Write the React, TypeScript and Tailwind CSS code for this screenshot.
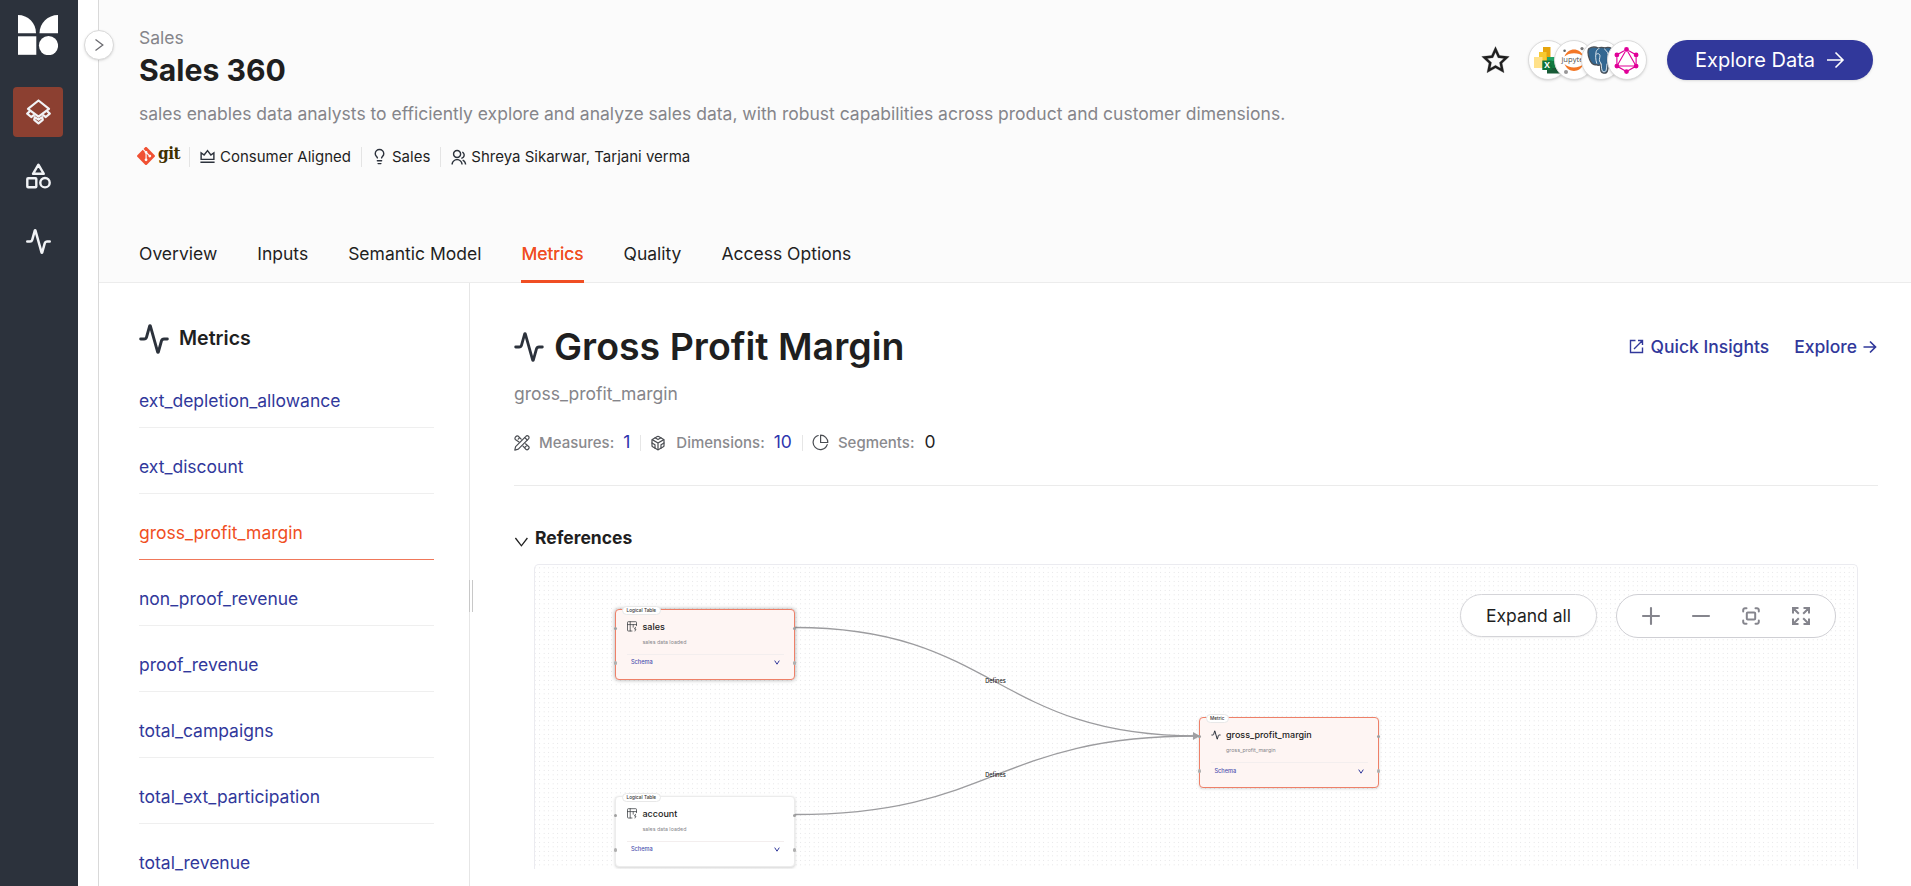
import React from "react";
import { RiStarLine, RiVipCrownLine, RiGroupLine } from "react-icons/ri";
import { SiGit, SiGraphql } from "react-icons/si";
import { Activity, Lightbulb } from "lucide-react";

const metricNames = [
  "ext_depletion_allowance",
  "ext_discount",
  "gross_profit_margin",
  "non_proof_revenue",
  "proof_revenue",
  "total_campaigns",
  "total_ext_participation",
  "total_revenue",
];

const tabs = ["Overview", "Inputs", "Semantic Model", "Metrics", "Quality", "Access Options"];

function Logo() {
  return (
    <svg width="40" height="40" viewBox="0 0 40 40" fill="#fff">
      <path d="M0 0C10 0 18 8 18 18.3H0Z" />
      <path d="M40 0C30 0 21.5 8 21.5 18.3H40Z" />
      <rect y="21.3" width="18.3" height="18.5" />
      <circle cx="30.5" cy="30.6" r="9.6" />
    </svg>
  );
}

function LayersIcon() {
  return (
    <svg width="25" height="26" viewBox="0 0 25 26" fill="none" stroke="#f1f3f6" strokeWidth="2.2" strokeLinejoin="round" strokeLinecap="round">
      <path d="M12.5 1.5 23 9.8 12.5 17.6 2 9.8Z" />
      <path d="M3.4 12.7 1.2 14.6 5.2 18 7.8 16.1M21.6 12.7l2.2 1.9-4 3.4-2.6-1.9" />
      <path d="M8.8 18.2 8.2 20.8 12.5 24.4 16.8 20.8 16.2 18.2 12.5 20.6Z" />
    </svg>
  );
}

function ShapesIcon() {
  return (
    <svg width="25" height="26" viewBox="0 0 25 26" fill="none" stroke="#f1f3f6" strokeWidth="2.4" strokeLinejoin="round">
      <path d="M12.4 1.7 17.8 10.8H7Z" />
      <rect x="1.3" y="15.2" width="9" height="9" rx="0.8" />
      <circle cx="19" cy="19.7" r="4.7" />
    </svg>
  );
}

function RulerIcon() {
  return (
    <svg width="16" height="16" viewBox="0 0 16 16" fill="none" stroke="#4a4d52" strokeWidth="1.2" strokeLinejoin="round" strokeLinecap="round">
      <path d="M.8 15.2 1.6 11.6 11.9 1.3a1.7 1.7 0 0 1 2.6 0 1.8 1.8 0 0 1 0 2.6L4.3 14.2Z" />
      <path d="M10.8 2.6 13.2 5M5 6.9 1.3 4.4C.2 2.8 2.3.5 4 1L7.2 4.2M4.2 4.2l1.3-1.3M9 11.2l3.2 3.4c1.4.8 3.6-1.4 2.7-2.9L11.5 8.8M11 12.2l1.2-1.1" />
    </svg>
  );
}

function CubeIcon() {
  return (
    <svg width="16" height="16" viewBox="0 0 24 24" fill="none" stroke="#4a4d52" strokeWidth="1.8" strokeLinejoin="round" strokeLinecap="round">
      <path d="M21 16V8a2 2 0 0 0-1-1.73l-7-4a2 2 0 0 0-2 0l-7 4A2 2 0 0 0 3 8v8a2 2 0 0 0 1 1.73l7 4a2 2 0 0 0 2 0l7-4A2 2 0 0 0 21 16z" />
      <path d="M7.5 4.21 12 6.81l4.5-2.6M7.5 19.79V14.6L3 12M21 12l-4.5 2.6v5.19M3.27 6.96 12 12.01l8.73-5.05M12 22.08V12" />
    </svg>
  );
}

function PieIcon() {
  return (
    <svg width="17" height="17" viewBox="0 0 17 17" fill="none" stroke="#4a4d52" strokeWidth="1.2" strokeLinejoin="round" strokeLinecap="round">
      <path d="M6.2 1.5A7.2 7.2 0 1 0 15.2 10.6" />
      <path d="M8.6 1.2V8.5H15.8A7.2 7.2 0 0 0 8.6 1.2Z" />
    </svg>
  );
}

function TableIcon() {
  return (
    <svg width="10" height="11" viewBox="0 0 10 11" fill="none" stroke="#3a3d42" strokeWidth="0.75" strokeLinejoin="round" strokeLinecap="round">
      <path d="M5 10H1.2A.7.7 0 0 1 .5 9.3V1.4A.7.7 0 0 1 1.2.7H8.8a.7.7 0 0 1 .7.7V4.6M.5 3.6H9.5M3.2.7V10M6.2 3.6V6.2" />
      <path d="M8.6 6.2 7.4 8H9L8 10" />
    </svg>
  );
}

function Tools() {
  return (
    <div className="flex w-[121px]">
      <div className="-mr-[13.7px] flex h-10 w-10 shrink-0 items-center justify-center rounded-full border border-[#dcdcdc] bg-white shadow-sm">
        <svg width="28" height="28" viewBox="0 0 28 28">
          <rect x="9" y="1" width="7.5" height="16" fill="#e6a50e" />
          <rect x="5" y="6" width="7.5" height="16" fill="#f7c92f" />
          <rect x="0" y="11" width="8.5" height="11" fill="#ffe18a" />
          <rect x="13" y="11" width="14" height="16" fill="#21a366" />
          <rect x="13" y="19" width="14" height="8.5" fill="#185c37" />
          <rect x="18" y="15" width="9" height="7" fill="#107c41" />
          <rect x="8.3" y="14.5" width="9.5" height="9.5" fill="#0f733a" />
          <text x="13" y="22.4" textAnchor="middle" fontSize="8.5" fontWeight="700" fill="#fff" fontFamily="Open Sans, sans-serif">X</text>
        </svg>
      </div>
      <div className="-mr-[13.7px] flex h-10 w-10 shrink-0 items-center justify-center rounded-full border border-[#dcdcdc] bg-white shadow-sm">
        <svg width="30" height="30" viewBox="0 0 30 30">
          <path d="M5.5 11.5C9 2.2 21 2.2 24.5 11.5C20 7 10 7 5.5 11.5Z" fill="#f37726" />
          <path d="M5.5 19C9 28.2 21 28.2 24.5 19C20 23.6 10 23.6 5.5 19Z" fill="#f37726" />
          <circle cx="5.6" cy="5.8" r="1.3" fill="#616262" />
          <circle cx="23" cy="3.6" r="1.6" fill="#767677" />
          <circle cx="7" cy="27" r="2" fill="#989798" />
          <text x="15" y="17.4" textAnchor="middle" fontSize="7.6" fill="#4e4e4e" fontFamily="Open Sans, sans-serif">jupyter</text>
        </svg>
      </div>
      <div className="-mr-[13.7px] flex h-10 w-10 shrink-0 items-center justify-center rounded-full border border-[#dcdcdc] bg-white shadow-sm">
        <svg width="28" height="28" viewBox="0 0 28 28" strokeLinejoin="round" strokeLinecap="round">
          <path d="M2 2.5C5 .6 9 1 11.3 2 13.5 1 16 1.3 18 1.9 21 .6 25.4 1.5 26.5 5c.8 3-1.5 8-3.2 11.3 1 .7 3 .4 3.8.7-1 2-4 2.6-6 2 0 2.5 0 6-1.6 7.6-1.6 1-4.6.6-5.5-1.4-.5-2-.3-4.6-.5-6.8-1.5 1.3-3.2 1-4.2.2C6 19.5 4.2 17.5 2.6 13.6 1.2 9.8.2 5 2 2.5Z" fill="#336791" stroke="#4a4f55" strokeWidth="1.3" />
          <path d="M9.7 17.2C8.5 14 8.3 9 9.2 5.5 10 3.5 11 2.8 12 2.5M17.5 3c2.8 2 4 5 3.7 7.3-.2 2 .4 3-.2 5M14 18c0-2-2-2-1.6-4.5C13 10 13.5 9 12 8c-1-.6-2-.3-2.6.2M14.2 18c.3 3 .2 6 1.6 7.5 1.5.8 3 0 3.4-1.2.5-2 .4-4.3.7-6.3" fill="none" stroke="#fff" strokeWidth="0.8" />
        </svg>
      </div>
      <div className="flex h-10 w-10 shrink-0 items-center justify-center rounded-full border border-[#dcdcdc] bg-white shadow-sm">
        <SiGraphql size={27} color="#e10098" />
      </div>
    </div>
  );
}

function Handles() {
  return (
    <>
      <i className="absolute top-[17px] -left-[2px] h-[3px] w-[3px] rounded-full bg-[#a0a0a0]" />
      <i className="absolute top-[17px] -right-[2px] h-[3px] w-[3px] rounded-full bg-[#a0a0a0]" />
      <i className="absolute top-[51px] -left-[2px] h-[4px] w-[3px] rounded-full bg-[#b0b0b0]" />
      <i className="absolute top-[51px] -right-[2px] h-[4px] w-[3px] rounded-full bg-[#b0b0b0]" />
    </>
  );
}

function Node({ kind, title, note, place, tone }: { kind: string; title: string; note: string; place: string; tone: string }) {
  return (
    <div className={`absolute h-[71px] w-[180px] rounded-[4px] border ${place} ${tone}`}>
      <span className="absolute -top-[4px] left-[6px] flex h-[9px] items-center rounded-full border-[0.5px] border-[#e8e8e8] bg-white px-[3.5px] pt-px text-[4.7px] font-medium text-[#333]">
        {kind}
      </span>
      <div className="flex h-full flex-col pt-[11px] pr-[10px] pl-[11px]">
        <div className="flex h-[12px] items-center gap-[5.5px]">
          {kind === "Metric" ? <Activity size={10} color="#2c323c" strokeWidth={2.4} /> : <TableIcon />}
          <span className="text-[9px] font-medium text-[#222]">{title}</span>
        </div>
        <div className="mt-[5.5px] ml-[15.5px] flex h-[9px] items-center text-[5.3px] text-[#85858a]">{note}</div>
        <div className="mt-[6.5px] flex h-[17px] items-center justify-between border-t-[0.5px] border-[#f3eeee] px-[4px]">
          <span className="text-[5.6px] font-medium text-[#4a4fae]">Schema</span>
          <svg width="6" height="5" viewBox="0 0 6 5" fill="none" stroke="#31389b" strokeWidth="1">
            <path d="M.7.6 3 4.2 5.3.6" />
          </svg>
        </div>
      </div>
      <Handles />
    </div>
  );
}

function Graph() {
  return (
    <div className="relative ml-5 h-[305px] w-[1324px] overflow-hidden rounded-t-[5px] border border-b-0 border-[#ebebf0]">
      <svg className="absolute inset-0" width="1322" height="305">
        <defs>
          <pattern id="dots" x="2.4" y="0.6" width="4.5" height="4.5" patternUnits="userSpaceOnUse">
            <circle cx="2.25" cy="2.25" r="0.4" fill="#bcbcc4" />
          </pattern>
        </defs>
        <rect width="1322" height="305" fill="url(#dots)" />
        <g fill="none" stroke="#9c9c9f" strokeWidth="1.3">
          <path d="M260 62.5C460 62.5 460 171 662 171" />
          <path d="M260 249.5C460 249.5 460 171 662 171" />
        </g>
        <path d="M658 167 665 171 658 175Z" fill="#a0a0a3" />
        <g fontSize="5.6" fontWeight="500" fill="#222" textAnchor="middle" fontFamily="Inter, sans-serif">
          <text x="460.5" y="117.5">Defines</text>
          <text x="460.5" y="211.5">Defines</text>
        </g>
      </svg>
      <Node kind="Logical Table" title="sales" note="sales data loaded" place="left-[80px] top-[43.5px]" tone="border-[#ee8068] bg-[#fef5f3] shadow-[0_0_4px_rgba(0,0,0,0.35)]" />
      <Node kind="Logical Table" title="account" note="sales data loaded" place="left-[80px] top-[230.5px]" tone="border-[#ececec] bg-white shadow-[0_1px_3px_rgba(0,0,0,0.18)]" />
      <Node kind="Metric" title="gross_profit_margin" note="gross_profit_margin" place="left-[663.5px] top-[152px]" tone="border-[#ee8068] bg-[#fef5f3] shadow-[0_1px_3px_rgba(0,0,0,0.15)]" />
      <div className="absolute top-[29px] right-[21px] flex items-start gap-[19px]">
        <button className="h-[43px] w-[137px] rounded-full border border-[#d4d4d8] bg-white pt-[2px] text-[17.5px] text-[#1f1f1f] shadow-[0_1px_2px_rgba(0,0,0,0.06)]">Expand all</button>
        <div className="flex h-[44px] w-[220px] items-center justify-between rounded-full border border-[#cfcfd4] bg-white px-[24px] text-[#85858d]">
          <svg width="20" height="20" viewBox="0 0 20 20" stroke="currentColor" strokeWidth="2.1" strokeLinecap="round"><path d="M2 10H18M10 2V18" /></svg>
          <svg width="20" height="20" viewBox="0 0 20 20" stroke="currentColor" strokeWidth="2.1" strokeLinecap="round"><path d="M2 10H18" /></svg>
          <svg width="20" height="20" viewBox="0 0 20 20" fill="none" stroke="currentColor" strokeWidth="2" strokeLinecap="round">
            <path d="M2.2 5.5V4A1.8 1.8 0 0 1 4 2.2H5.5M14.5 2.2H16A1.8 1.8 0 0 1 17.8 4V5.5M17.8 14.5V16A1.8 1.8 0 0 1 16 17.8H14.5M5.5 17.8H4A1.8 1.8 0 0 1 2.2 16V14.5" />
            <rect x="5.8" y="6.6" width="8.4" height="7" rx="1" />
          </svg>
          <svg width="20" height="20" viewBox="0 0 20 20" fill="none" stroke="currentColor" strokeWidth="2">
            <path d="M2 7.5V2H7.5M2.3 2.3 7.8 7.8M12.5 2H18V7.5M17.7 2.3 12.2 7.8M18 12.5V18H12.5M17.7 17.7 12.2 12.2M7.5 18H2V12.5M2.3 17.7 7.8 12.2" />
          </svg>
        </div>
      </div>
    </div>
  );
}

export default function App() {
  return (
    <div className="flex h-[886px] w-[1911px] overflow-hidden bg-white font-[Inter,sans-serif] text-[#1f1f1f]">
      <nav className="flex w-[78px] shrink-0 flex-col items-center bg-[#2c323c] pt-[15px]">
        <div className="-ml-[2px] h-10 w-10"><Logo /></div>
        <div className="mt-8 -ml-[2px] flex h-[50px] w-[50px] items-center justify-center rounded-[4px] bg-[#8c4031]"><LayersIcon /></div>
        <div className="mt-[26px] -ml-px"><ShapesIcon /></div>
        <div className="mt-[39px] -ml-px"><Activity size={27} color="#f1f3f6" strokeWidth={2.2} /></div>
      </nav>
      <div className="relative w-[21px] shrink-0 border-r border-[#d9d9d9]">
        <button className="absolute top-[30px] left-[6px] z-10 flex h-[30px] w-[30px] items-center justify-center rounded-full border border-[#d9d9d9] bg-white shadow-sm">
          <svg width="10" height="14" viewBox="0 0 10 14" fill="none" stroke="#6b6b70" strokeWidth="1.3"><path d="M1.5 1.5 8.8 7 1.5 12.5" /></svg>
        </button>
      </div>
      <div className="flex min-w-0 flex-1 flex-col">
        <header className="flex h-[283px] shrink-0 flex-col border-b border-[#ececec] bg-[#fbfbfb] pl-10">
          <div className="flex h-[100px] justify-between">
            <div className="pt-[26px]">
              <div className="text-[17.5px] leading-[24px] text-[#85858a]">Sales</div>
              <h1 className="mt-[1px] text-[30.2px] leading-[38px] font-bold">Sales 360</h1>
            </div>
            <div className="mt-10 mr-[38px] flex h-10 items-center">
              <RiStarLine size={29} stroke="currentColor" strokeWidth={0.2} className="mr-[18px]" />
              <Tools />
              <button className="ml-[18px] flex h-10 w-[206px] items-center justify-center gap-[11px] rounded-full bg-[#31389b] text-[20px] text-white shadow-sm">
                Explore Data
                <svg width="19" height="18" viewBox="0 0 19 18" fill="none" stroke="#fff" strokeWidth="1.6"><path d="M1 9H17M9.5 1.5 17 9 9.5 16.5" /></svg>
              </button>
            </div>
          </div>
          <p className="text-[17.5px] leading-[28px] whitespace-nowrap text-[#85858a]">
            sales enables data analysts to efficiently explore and analyze sales data, with robust capabilities across product and customer dimensions.
          </p>
          <div className="mt-[18px] flex h-[22px] items-center text-[15px]">
            <SiGit size={18} color="#f05133" className="-mt-[3px] -ml-[2px]" />
            <span className="ml-[3px] w-[23px] -translate-y-[3px] font-['DejaVu_Serif_Condensed','DejaVu_Serif',serif] text-[17px] font-bold tracking-[-0.5px] text-[#413000]">git</span>
            <i className="mr-[9px] ml-[8px] h-5 w-px bg-[#e4e4e4]" />
            <RiVipCrownLine size={17} color="#2c323c" className="-mt-px" />
            <span className="ml-1">Consumer Aligned</span>
            <i className="mr-[9px] ml-[10px] h-5 w-px bg-[#e4e4e4]" />
            <Lightbulb size={17} color="#2c323c" className="-mt-[2px]" />
            <span className="ml-1">Sales</span>
            <i className="mr-[9px] ml-[10px] h-5 w-px bg-[#e4e4e4]" />
            <RiGroupLine size={17} color="#2c323c" />
            <span className="ml-1">Shreya Sikarwar, Tarjani verma</span>
          </div>
          <div className="mt-auto flex h-[58px] gap-10 text-[17.5px]">
            {tabs.map((t) => (
              <div key={t} className={t === "Metrics" ? "-mb-px border-b-[3px] border-[#f04e23] pt-[17px] text-[#f04e23] [text-shadow:0_0_0.5px_currentColor]" : "pt-[17px]"}>
                {t}
              </div>
            ))}
          </div>
        </header>
        <div className="flex min-h-0 flex-1">
          <aside className="relative w-[371px] shrink-0 border-r border-[#e6e6e6] pr-[35px] pl-10">
            <h2 className="mt-[38px] flex h-9 items-center gap-[9px] text-[19.6px] font-semibold">
              <Activity size={32} color="#2c323c" strokeWidth={2.2} className="-ml-px" />
              Metrics
            </h2>
            <ul className="mt-[5px] text-[17.5px]">
              {metricNames.map((m) => (
                <li key={m} className={m === "gross_profit_margin" ? "flex h-[66px] items-end border-b border-[#f0785a] pb-[12px] leading-[28px] text-[#f04e23]" : "flex h-[66px] items-end border-b border-[#efefef] pb-[12px] leading-[28px] text-[#31389b]"}>
                  {m}
                </li>
              ))}
            </ul>
            <i className="absolute top-[297px] -right-[4px] h-8 w-[4px] border-x border-[#c8c8c8] bg-white" />
          </aside>
          <main className="min-w-0 flex-1 pl-11">
            <div className="mt-[36px] flex h-[56px] w-[1364px] items-center">
              <Activity size={32} color="#2c323c" strokeWidth={2.1} className="-ml-px" />
              <h1 className="ml-[9px] text-[37.5px] font-semibold">Gross Profit Margin</h1>
              <div className="mr-px ml-auto flex items-center text-[17.5px] font-medium text-[#31389b]">
                <svg width="15" height="15" viewBox="0 0 15 15" fill="none" stroke="currentColor" strokeWidth="1.4" className="-mt-[2px] mr-[7px]">
                  <path d="M6.5 1.5H1.5V13.5H13.5V8.5M9 1.5H13.5V6M13.5 1.5 5 10" />
                </svg>
                Quick Insights
                <span className="ml-[25px]">Explore</span>
                <svg width="14" height="14" viewBox="0 0 14 14" fill="none" stroke="currentColor" strokeWidth="1.7" className="ml-[6px]">
                  <path d="M.5 7H12.5M7 1.5 12.5 7 7 12.5" />
                </svg>
              </div>
            </div>
            <div className="mt-[5px] text-[17.5px] leading-[28px] text-[#85858a]">gross_profit_margin</div>
            <div className="mt-[22px] flex h-[25px] items-center text-[15px] font-medium text-[#8a8a8e]">
              <RulerIcon />
              <span className="mt-[2px] ml-[9px]">Measures:</span>
              <b className="ml-[9px] text-[17.5px] font-normal text-[#2d35ae]">1</b>
              <i className="mr-[9px] ml-[10px] h-4 w-px bg-[#e6e6e6]" />
              <CubeIcon />
              <span className="mt-[2px] ml-[10px]">Dimensions:</span>
              <b className="ml-[9px] text-[17.5px] font-normal text-[#2d35ae]">10</b>
              <i className="mr-[9px] ml-[10px] h-4 w-px bg-[#e6e6e6]" />
              <PieIcon />
              <span className="mt-[2px] ml-[9px]">Segments:</span>
              <b className="ml-[10px] text-[17.5px] font-normal text-[#1f1f1f]">0</b>
            </div>
            <div className="mt-[30px] w-[1364px] border-t border-[#ebebeb]" />
            <div className="mt-[38px] mb-[12px] flex h-[28px] items-center gap-[7px] text-[17.5px] font-bold">
              <svg width="14" height="10" viewBox="0 0 14 10" fill="none" stroke="#1f1f1f" strokeWidth="1.3" className="mt-[7px]"><path d="M1.4 1 7.4 8.8 13.4 1" /></svg>
              References
            </div>
            <Graph />
          </main>
        </div>
      </div>
    </div>
  );
}
